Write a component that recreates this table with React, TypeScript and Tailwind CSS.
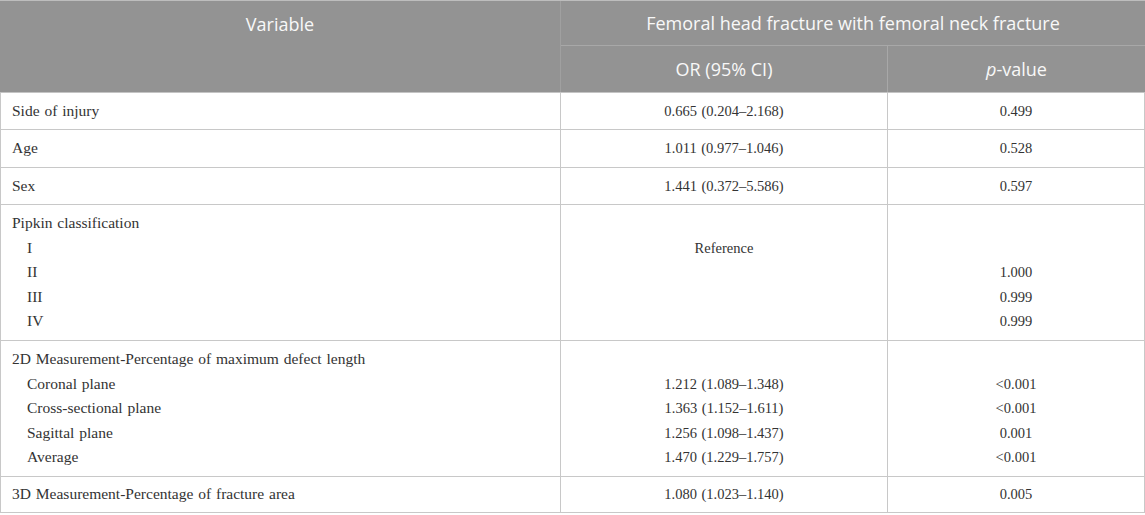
import React from "react";

type Row = { label: string[]; indent: boolean[]; or: string[]; p: string[]; h: string };

const rows: Row[] = [
  { label: ["Side of injury"], indent: [false], or: ["0.665 (0.204–2.168)"], p: ["0.499"], h: "h-[37px]" },
  { label: ["Age"], indent: [false], or: ["1.011 (0.977–1.046)"], p: ["0.528"], h: "h-[38px]" },
  { label: ["Sex"], indent: [false], or: ["1.441 (0.372–5.586)"], p: ["0.597"], h: "h-[37px]" },
  {
    label: ["Pipkin classification", "I", "II", "III", "IV"],
    indent: [false, true, true, true, true],
    or: ["", "Reference", "", "", ""],
    p: ["", "", "1.000", "0.999", "0.999"],
    h: "h-[136px]",
  },
  {
    label: [
      "2D Measurement-Percentage of maximum defect length",
      "Coronal plane",
      "Cross-sectional plane",
      "Sagittal plane",
      "Average",
    ],
    indent: [false, true, true, true, true],
    or: ["", "1.212 (1.089–1.348)", "1.363 (1.152–1.611)", "1.256 (1.098–1.437)", "1.470 (1.229–1.757)"],
    p: ["", "<0.001", "<0.001", "0.001", "<0.001"],
    h: "h-[136px]",
  },
  {
    label: ["3D Measurement-Percentage of fracture area"],
    indent: [false],
    or: ["1.080 (1.023–1.140)"],
    p: ["0.005"],
    h: "h-[36px]",
  },
];

function Lines({
  items,
  center,
  indent,
  cls,
}: {
  items: string[];
  center?: boolean;
  indent?: boolean[];
  cls: string;
}) {
  return (
    <div className={"flex flex-col " + cls + " " + (center ? "items-center" : "items-start")}>
      {items.map((t, i) => (
        <div
          key={i}
          className={"h-[24.5px] leading-[24.5px] whitespace-nowrap " + (indent && indent[i] ? "pl-[15px]" : "")}
        >
          {t || "\u00a0"}
        </div>
      ))}
    </div>
  );
}

export default function App() {
  return (
    <div className="w-[1145px] h-[515px] bg-white">
      <div className="w-[1145px] border-t border-[#bdbdbd]">
        {/* Header */}
        <div
          className="flex bg-[#939393] text-[#f8f8f8] text-[18px] border-b border-[#c4c4c4]"
          style={{ fontFamily: '"Open Sans", "Noto Sans", sans-serif' }}
        >
          <div className="w-[561px] h-[91px] border-r border-[#a0a0a0]">
            <div className="h-[46px] flex items-center justify-center">Variable</div>
          </div>
          <div className="flex-1 flex flex-col">
            <div className="h-[45px] flex items-center justify-center border-b border-[#a8a8a8]">
              Femoral head fracture with femoral neck fracture
            </div>
            <div className="h-[46px] flex">
              <div className="w-[327px] flex items-center justify-center border-r border-[#a8a8a8]">OR (95% CI)</div>
              <div className="flex-1 flex items-center justify-center">
                <span className="italic">p</span>-value
              </div>
            </div>
          </div>
        </div>
        {/* Body */}
        <div
          className="text-[#333333] border-l border-r border-[#c8c8c8]"
          style={{ fontFamily: '"Liberation Serif", "Times New Roman", serif' }}
        >
          {rows.map((r, i) => (
            <div key={i} className={"flex border-b border-[#c8c8c8] " + r.h}>
              <div className="w-[560px] flex items-center pl-[11px] border-r border-[#c8c8c8]">
                <Lines items={r.label} indent={r.indent} cls="text-[15.5px] [word-spacing:1px]" />
              </div>
              <div className="w-[327px] flex items-center justify-center border-r border-[#c8c8c8]">
                <Lines items={r.or} center cls="text-[14.5px] [word-spacing:1px]" />
              </div>
              <div className="flex-1 flex items-center justify-center">
                <Lines items={r.p} center cls="text-[14.5px]" />
              </div>
            </div>
          ))}
        </div>
      </div>
    </div>
  );
}
